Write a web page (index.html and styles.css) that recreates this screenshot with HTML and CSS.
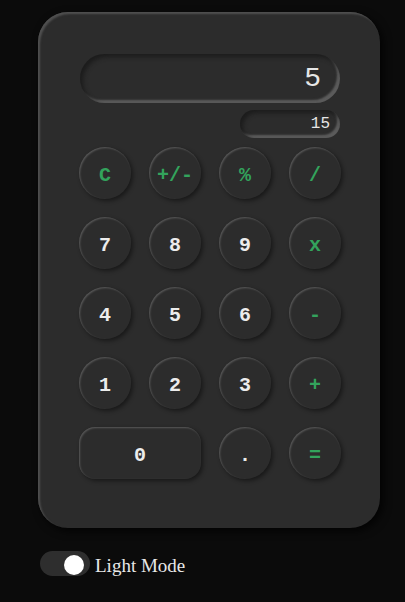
FILE: index.html
```html
<!DOCTYPE html>
<html>
<head>
<meta charset="utf-8">
<link rel="stylesheet" href="styles.css">
</head>
<body>
<div class="page">
  <div class="calc">
    <div class="display">5</div>
    <div class="sub-display">15</div>
    <div class="keys">
      <button class="key op">C</button>
      <button class="key op">+/-</button>
      <button class="key op">%</button>
      <button class="key op">/</button>
      <button class="key">7</button>
      <button class="key">8</button>
      <button class="key">9</button>
      <button class="key op">x</button>
      <button class="key">4</button>
      <button class="key">5</button>
      <button class="key">6</button>
      <button class="key op">-</button>
      <button class="key">1</button>
      <button class="key">2</button>
      <button class="key">3</button>
      <button class="key op">+</button>
      <button class="key wide">0</button>
      <button class="key">.</button>
      <button class="key op">=</button>
    </div>
  </div>
  <label class="mode">
    <span class="switch"><span class="knob"></span></span>
    <span class="mode-text">Light Mode</span>
  </label>
</div>
</body>
</html>
```

FILE: styles.css
```css
html, body {
  margin: 0;
  padding: 0;
  background: #0b0b0b;
}

.page {
  padding: 12px 0 0 38px;
}

.calc {
  box-sizing: border-box;
  width: 342px;
  height: 516px;
  padding: 42px 39px 0 41px;
  background: #2c2c2c;
  border-radius: 30px;
  box-shadow: inset 2px 2px 2px #505050, 3px 3px 8px rgba(0, 0, 0, 0.8);
}

.display {
  box-sizing: border-box;
  width: 260px;
  height: 49px;
  margin: 0 1px;
  border-radius: 25px;
  display: flex;
  align-items: center;
  justify-content: flex-end;
  padding-right: 19px;
  font-family: "Liberation Mono", "Courier New", monospace;
  font-size: 28px;
  color: #e6e6e6;
  box-shadow: inset 3px 3px 4px #1c1c1c, inset -3px -3px 2px #5c5c5c;
}

.sub-display {
  box-sizing: border-box;
  width: 100px;
  height: 28px;
  margin: 7px 1px 0 auto;
  border-radius: 14px;
  display: flex;
  align-items: center;
  justify-content: flex-end;
  padding-right: 10px;
  font-family: "Liberation Mono", "Courier New", monospace;
  font-size: 16px;
  color: #e6e6e6;
  box-shadow: inset 3px 3px 4px #1c1c1c, inset -3px -3px 2px #5c5c5c;
}

.keys {
  margin-top: 9px;
  display: grid;
  grid-template-columns: repeat(4, 52px);
  grid-auto-rows: 52px;
  gap: 18px;
}

.key {
  width: 52px;
  height: 52px;
  border: none;
  border-radius: 50%;
  background: #2c2c2c;
  color: #ececec;
  font-family: "Liberation Mono", "Courier New", monospace;
  font-weight: bold;
  font-size: 20px;
  padding: 4px 0 0;
  box-shadow: inset 1px 1px 2px rgba(255, 255, 255, 0.22), 2px 2px 4px rgba(0, 0, 0, 0.45);
}

.key.op {
  color: #33a35c;
}

.key.wide {
  grid-column: span 2;
  width: 122px;
  border-radius: 16px;
}

.mode {
  display: flex;
  align-items: center;
  gap: 5px;
  margin: 21px 0 0 2px;
}

.switch {
  box-sizing: border-box;
  width: 50px;
  height: 25px;
  border-radius: 13px;
  background: #2e2e2e;
  display: flex;
  align-items: center;
  justify-content: flex-end;
  padding: 3px 6px 0 0;
}

.knob {
  width: 20px;
  height: 20px;
  border-radius: 50%;
  background: #ffffff;
}

.mode-text {
  font-family: "Liberation Serif", "Times New Roman", serif;
  font-size: 19px;
  color: #e8e8e8;
  padding-top: 6px;
}
```
